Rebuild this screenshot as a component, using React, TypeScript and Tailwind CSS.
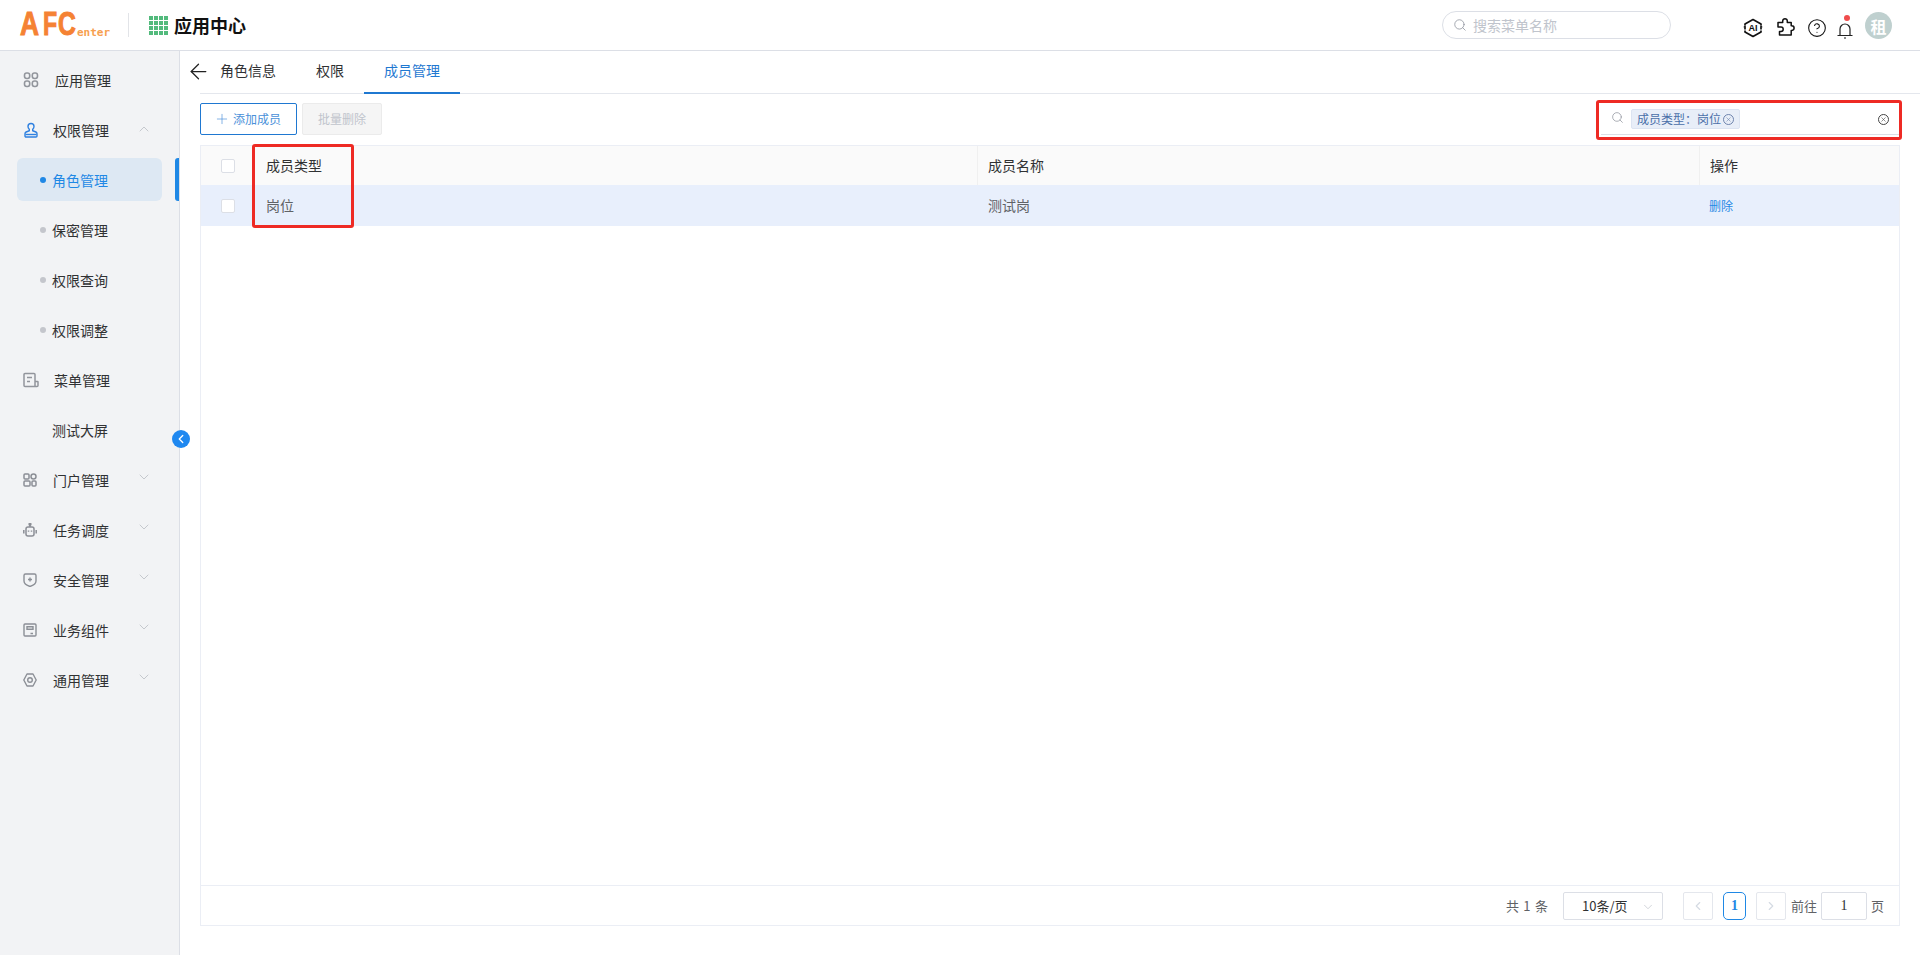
import { ArrowLeft, ChevronDown, ChevronLeft, ChevronRight, ChevronUp, CircleHelp, Plus, Search, X } from 'lucide-react';

const cjk = "font-['Noto_Sans_CJK_SC','Noto_Sans',sans-serif]";

function AppsIcon() {
  return (
    <svg width="16" height="16" viewBox="0 0 16 16" fill="none" stroke="#92959c" strokeWidth="1.6">
      <rect x="1.500" y="1" width="5.200" height="5.500" rx="2.200" />
      <rect x="9.300" y="1" width="5.200" height="5.500" rx="2.200" />
      <rect x="1.500" y="9" width="5.200" height="5.500" rx="2.200" />
      <rect x="9.300" y="9" width="5.200" height="5.500" rx="2.200" />
    </svg>
  );
}

function UserIcon() {
  return (
    <svg width="16" height="16" viewBox="0 0 16 16" fill="none" stroke="#2f80e0" strokeWidth="1.400">
      <path d="M5 4.500a3 3 0 1 1 6 0c0 1.400-.6 2.200-1.300 2.800v1.400l3.200 1.300c.8.4 1.100 1 1.100 1.800V14a1 1 0 0 1-1 1H3a1 1 0 0 1-1-1v-2.200c0-.8.3-1.400 1.100-1.800l3.200-1.300V7.300C5.600 6.700 5 5.900 5 4.500z" />
      <path d="M2.500 12.500h11" />
    </svg>
  );
}

function MenuDocIcon() {
  return (
    <svg width="16" height="16" viewBox="0 0 16 16" fill="none" stroke="#92959c" strokeWidth="1.500">
      <path d="M12 14.500H2a1 1 0 0 1-1-1v-11a1 1 0 0 1 1-1h9a1 1 0 0 1 1 1v12zM12 9.500h2.500a.5.5 0 0 1 .5.5v3.500a1 1 0 0 1-1 1h-2M4 5.500h5M4 9.500h3" />
    </svg>
  );
}

function PortalIcon() {
  return (
    <svg width="14" height="14" viewBox="0 0 14 14" fill="none" stroke="#8c8f96" strokeWidth="1.500">
      <rect x="1" y="1" width="5" height="5" rx="1" />
      <circle cx="10.500" cy="3.500" r="2.500" />
      <rect x="1" y="8" width="6" height="5" rx="1" />
      <rect x="9" y="8" width="4" height="5" rx="1" />
    </svg>
  );
}

function RobotIcon() {
  return (
    <svg width="14" height="14" viewBox="0 0 14 14" fill="none" stroke="#8c8f96" strokeWidth="1.500">
      <rect x="3" y="4" width="8" height="9" rx="2" />
      <path d="M7 4V2M.8 7v3.500M13.200 7v3.500" />
      <circle cx="7" cy="1.300" r=".9" fill="#8c8f96" />
      <path d="M5.500 7.500v1.200M8.500 7.500v1.200" />
    </svg>
  );
}

function ShieldIcon() {
  return (
    <svg width="14" height="14" viewBox="0 0 14 14" fill="none" stroke="#8c8f96" strokeWidth="1.400">
      <path d="M2.500 1h9A1.500 1.500 0 0 1 13 2.500V8c0 2.500-3 4.500-6 5.500C4 12.500 1 10.500 1 8V2.500A1.500 1.500 0 0 1 2.500 1zM7 4.500v4M5 6.500h4" />
    </svg>
  );
}

function SaveIcon() {
  return (
    <svg width="14" height="14" viewBox="0 0 14 14" fill="none" stroke="#8c8f96" strokeWidth="1.400">
      <rect x="1" y="1" width="12" height="12" rx="1" />
      <path d="M4 3.800h6v2.400H4zM7.500 10.500h2.500" />
    </svg>
  );
}

function GearIcon() {
  return (
    <svg width="14" height="14" viewBox="0 0 14 14" fill="none" stroke="#8c8f96" strokeWidth="1.400">
      <path d="M4 1h6l3.200 6L10 13H4L.8 7z" strokeLinejoin="round" />
      <circle cx="7" cy="7" r="2.300" />
    </svg>
  );
}

function AiIcon() {
  return (
    <svg width="20" height="20" viewBox="0 0 20 20">
      <path d="M2 7.500V6L10 1.500 18 6v1.500M2 12.500V14l8 4.500 8-4.500v-1.500M1 9.500l1-1v3M19 9.500l-1-1v3" fill="none" stroke="#111" strokeWidth="1.700" strokeLinejoin="round" />
      <text x="10" y="13.200" textAnchor="middle" fontSize="9" fontWeight="700" fontFamily="Liberation Sans" fill="#111">AI</text>
    </svg>
  );
}

function PluginIcon() {
  return (
    <svg width="20" height="20" viewBox="0 0 20 20" fill="none" stroke="#111" strokeWidth="1.500" strokeLinejoin="round">
      <path d="M2 5.500h4.700V4a2.300 2.300 0 0 1 4.600 0v1.500h3.900v3.300h.6a2.300 2.300 0 0 1 0 4.600h-.6V18H3.500v-3.500H5a2.200 2.200 0 0 0 0-4.400H2z" />
    </svg>
  );
}

function BellIcon() {
  return (
    <svg width="16" height="20" viewBox="0 0 16 20" fill="none" stroke="#222" strokeWidth="1.200">
      <path d="M.5 15.500h15M3 15.500V9a5 5 0 0 1 10 0v6.500" />
      <path d="M7.300 18h1.400" strokeWidth="1.500" />
    </svg>
  );
}

function ClearIcon({ size, color }: { size: number; color: string }) {
  return (
    <span className="flex items-center justify-center rounded-full border" style={{ width: size, height: size, borderColor: color }}>
      <X size={size - 4} color={color} strokeWidth={2} />
    </span>
  );
}

const menus = [
  { label: '应用管理', icon: <AppsIcon />, labelClass: 'ml-[16px]' },
  { label: '权限管理', icon: <UserIcon />, open: true, labelClass: 'ml-[14px]' },
  { label: '角色管理', sub: true, active: true },
  { label: '保密管理', sub: true },
  { label: '权限查询', sub: true },
  { label: '权限调整', sub: true },
  { label: '菜单管理', icon: <MenuDocIcon />, labelClass: 'ml-[15px]' },
  { label: '测试大屏', plain: true },
  { label: '门户管理', icon: <PortalIcon />, arrow: true, labelClass: 'ml-[14px]' },
  { label: '任务调度', icon: <RobotIcon />, arrow: true, labelClass: 'ml-[14px]' },
  { label: '安全管理', icon: <ShieldIcon />, arrow: true, labelClass: 'ml-[14px]' },
  { label: '业务组件', icon: <SaveIcon />, arrow: true, labelClass: 'ml-[14px]' },
  { label: '通用管理', icon: <GearIcon />, arrow: true, labelClass: 'ml-[14px]' },
];

function Sidebar() {
  return (
    <aside className="relative w-[180px] shrink-0 bg-[#f2f3f5] border-r border-[#dcdfe6] pt-[4px]">
      {menus.map((m) => {
        if (m.sub) {
          return (
            <div key={m.label} className="relative h-[50px] flex items-center">
              {m.active && <div className="absolute left-[17px] top-[3px] w-[145px] h-[43px] rounded-[6px] bg-[#dde8f3]" />}
              {m.active && <div className="absolute right-0 top-[3px] w-[4px] h-[43px] rounded-l-[3px] bg-[#1f88e5]" />}
              <span className={`relative ml-[40px] w-[6px] h-[6px] rounded-full ${m.active ? 'bg-[#1f88e5]' : 'bg-[#c4c6cc]'}`} />
              <span className={`relative ml-[6px] text-[14px] ${m.active ? 'text-[#1f88e5]' : 'text-[#303133]'}`}>{m.label}</span>
            </div>
          );
        }
        return (
          <div key={m.label} className="relative h-[50px] flex items-center">
            {m.plain ? <span className="ml-[52px] text-[14px] text-[#303133]">{m.label}</span> : (
              <>
                <span className="ml-[23px] w-[16px] flex justify-start">{m.icon}</span>
                <span className={`${m.labelClass} text-[14px] text-[#303133]`}>{m.label}</span>
              </>
            )}
            {m.open && <ChevronUp size={16} color="#b4b8bf" strokeWidth={1.100} className="absolute left-[136px] top-[16px]" />}
            {m.arrow && <ChevronDown size={16} color="#b4b8bf" strokeWidth={1.100} className="absolute left-[136px] top-[14px]" />}
          </div>
        );
      })}
      <div className="absolute left-[172px] top-[379px] w-[18px] h-[18px] rounded-full bg-[#1f88f0] flex items-center justify-center">
        <ChevronLeft size={14} color="#fff" strokeWidth={2.200} />
      </div>
    </aside>
  );
}

function Header() {
  return (
    <header className="h-[51px] shrink-0 bg-white border-b border-[#dcdfe6] flex items-center">
      <div className="ml-[20px] w-[90px] h-[30px] flex items-end text-[#f58233] font-['Liberation_Sans',sans-serif] font-bold leading-none">
        <span className="text-[33px] w-[23px] inline-block origin-left scale-x-[0.8] [-webkit-text-stroke:1px_#f58233]">A</span>
        <span className="text-[33px] w-[15px] inline-block origin-left scale-x-[0.7] [-webkit-text-stroke:1px_#f58233]">F</span>
        <span className="text-[33px] w-[19px] inline-block origin-left scale-x-[0.75] [-webkit-text-stroke:1px_#f58233]">C</span>
        <span className="text-[11px] font-bold text-[#f7a04f] font-['DejaVu_Sans_Mono',monospace] mb-[2px]">enter</span>
      </div>
      <div className="ml-[18px] w-px h-[24px] bg-[#e2e4e8]" />
      <div className="ml-[20px] grid grid-cols-4 gap-px w-[19px] h-[19px]">
        {[...Array(16)].map((_, i) => <span key={i} className="bg-[#52ba7c]" />)}
      </div>
      <span className="ml-[6px] text-[18px] font-bold text-[#111]">应用中心</span>
      <div className="ml-auto mr-[249px] w-[229px] h-[28px] rounded-full border border-[#dcdfe6] flex items-center pl-[10px]">
        <Search size={14} color="#8a8f99" strokeWidth={1.300} />
        <span className="ml-[6px] text-[14px] text-[#c0c4cc]">搜索菜单名称</span>
      </div>
      <div className="absolute left-[1743px] top-[18px]"><AiIcon /></div>
      <div className="absolute left-[1776px] top-[17px]"><PluginIcon /></div>
      <div className="absolute left-[1807px] top-[18px]"><CircleHelp size={20} color="#111" strokeWidth={1.300} /></div>
      <div className="absolute left-[1837px] top-[20px]"><BellIcon /></div>
      <div className="absolute left-[1844px] top-[15px] w-[6px] h-[6px] rounded-full bg-[#f04c4c]" />
      <div className="absolute left-[1865px] top-[12px] w-[27px] h-[27px] rounded-full bg-[#bfd0cf] text-white font-bold text-[16px] flex items-center justify-center">租</div>
    </header>
  );
}

function Tabs() {
  return (
    <div className="h-[43px] ml-[20px] border-b border-[#e4e7ed] flex items-start text-[14px]">
      <ArrowLeft size={25} color="#222" strokeWidth={1.200} className="-ml-[14px] mt-[8px]" />
      <span className="ml-[9px] mt-[9px] text-[#303133]">角色信息</span>
      <span className="ml-[40px] mt-[9px] text-[#303133]">权限</span>
      <div className="relative ml-[20px] w-[96px] h-[43px] text-center pt-[9px] text-[#1f78d1] border-b-2 border-[#1f78d1]">成员管理</div>
    </div>
  );
}

function Toolbar() {
  return (
    <div className="relative h-[51px] mx-[20px] flex items-start gap-[5px] pt-[9px]">
      <button className="w-[97px] h-[32px] rounded-[2px] border border-[#1f78d1] text-[#4a90d9] text-[12px] flex items-center justify-center pr-[2px]">
        <Plus size={16} strokeWidth={1} className="mr-[3px]" />添加成员
      </button>
      <button className="w-[80px] h-[32px] rounded-[2px] border border-[#ebebeb] bg-[#f5f5f5] text-[#c0c4cc] text-[12px]">批量删除</button>
      <div className="absolute right-0 top-[14px] w-[299px] h-[27px] border-b border-[#dcdfe6] flex items-center pl-[10px] pb-[4px]">
        <Search size={13} color="#8a8f99" strokeWidth={1.300} className="-mt-[4px]" />
        <div className="ml-[7px] h-[20px] px-[5px] rounded-[2px] bg-[#e8eef8] border border-[#dce4f2] flex items-center text-[12px] text-[#4a6fa8]">
          成员类型：岗位
          <span className="ml-[2px]"><ClearIcon size={11} color="#6d83ad" /></span>
        </div>
        <span className="ml-auto mr-[11px]"><ClearIcon size={11} color="#444" /></span>
      </div>
    </div>
  );
}

function Checkbox() {
  return <span className="block w-[14px] h-[14px] rounded-[2px] border border-[#dcdfe6] bg-white" />;
}

function MemberTable() {
  return (
    <div className="relative mx-[20px] h-[781px] border border-[#ebeef5] flex flex-col">
      <div className="h-[39px] flex bg-[#fafafa] text-[14px] text-[#303133]">
        <div className="w-[51px] flex items-center justify-center pl-[2px]"><Checkbox /></div>
        <div className="w-[725px] flex items-center pl-[14px]">成员类型</div>
        <div className="w-[722px] flex items-center pl-[10px] border-l border-[#f0f0f0]">成员名称</div>
        <div className="flex-1 flex items-center pl-[10px] border-l border-[#f0f0f0]">操作</div>
      </div>
      <div className="h-[41px] flex bg-[#e8effc] text-[14px] text-[#606266]">
        <div className="w-[51px] flex items-center justify-center pl-[2px]"><Checkbox /></div>
        <div className="w-[725px] flex items-center pl-[14px]">岗位</div>
        <div className="w-[722px] flex items-center pl-[11px]">测试岗</div>
        <div className="flex-1 flex items-center pl-[10px] text-[#1f88e5] text-[12px]">删除</div>
      </div>
      <div className="flex-1" />
      <div className="h-[40px] border-t border-[#ebeef5] flex items-center justify-end pr-[15px] text-[13px] text-[#606266]">
        <span className="[word-spacing:1.500px]">共 1 条</span>
        <div className="ml-[15px] w-[100px] h-[28px] rounded-[2px] border border-[#dcdfe6] relative flex items-center pl-[18px] text-[#303133]">
          10条/页
          <ChevronDown size={14} color="#c0c4cc" strokeWidth={1.200} className="absolute right-[7px] top-[7px]" />
        </div>
        <div className="ml-[20px] w-[30px] h-[28px] rounded-[2px] border border-[#e4e7ed] flex items-center justify-center"><ChevronLeft size={14} color="#d5dbe3" strokeWidth={2} /></div>
        <div className="ml-[10px] w-[23px] h-[28px] rounded-[5px] border border-[#1f88e5] text-[#1f88e5] font-bold flex items-center justify-center font-['Liberation_Serif',serif] text-[14px]">1</div>
        <div className="ml-[10px] w-[30px] h-[28px] rounded-[2px] border border-[#e4e7ed] flex items-center justify-center"><ChevronRight size={14} color="#d5dbe3" strokeWidth={2} /></div>
        <span className="ml-[5px]">前往</span>
        <div className="ml-[4px] w-[46px] h-[28px] rounded-[2px] border border-[#dcdfe6] flex items-center justify-center text-[#303133] font-['Liberation_Serif',serif] text-[14px]">1</div>
        <span className="ml-[4px]">页</span>
      </div>
    </div>
  );
}

export default function App() {
  return (
    <div className={`relative w-[1920px] h-[955px] overflow-hidden bg-white flex flex-col ${cjk}`}>
      <Header />
      <div className="flex flex-1 min-h-0">
        <Sidebar />
        <main className="flex-1 min-w-0">
          <Tabs />
          <Toolbar />
          <MemberTable />
        </main>
      </div>
      {/* red annotation boxes drawn over the screenshot */}
      <div className="absolute left-[252px] top-[144px] w-[102px] h-[84px] border-[3px] border-[#ee2a24] rounded-[3px]" />
      <div className="absolute left-[1596px] top-[100px] w-[306px] h-[40px] border-[3px] border-[#ee2a24] rounded-[3px]" />
    </div>
  );
}
